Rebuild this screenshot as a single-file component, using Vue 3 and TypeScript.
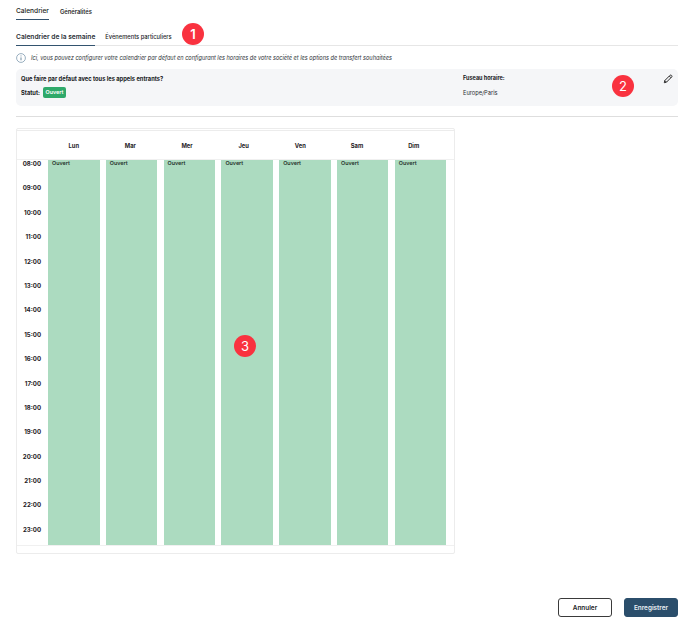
<script setup lang="ts">
const days: string[] = ['Lun', 'Mar', 'Mer', 'Jeu', 'Ven', 'Sam', 'Dim']
const hours: string[] = Array.from({ length: 16 }, (_, i) => `${String(i + 8).padStart(2, '0')}:00`)
</script>

<template>
  <div class="page">
    <nav class="tabs-main">
      <span class="main-tab active">Calendrier</span>
      <span class="main-tab">Généralités</span>
    </nav>

    <nav class="tabs-sub">
      <span class="sub-tab active">Calendrier de la semaine</span>
      <span class="sub-tab">Évènements particuliers</span>
      <span class="marker marker-1">1</span>
    </nav>

    <p class="info">
      <svg class="info-icon" width="10" height="10" viewBox="0 0 10 10" fill="none">
        <circle cx="5" cy="5" r="4.4" stroke="#7f9ab0" stroke-width="0.8" />
        <path d="M5 4.4V7.3" stroke="#5f7d95" stroke-width="0.9" />
        <path d="M5 2.5V3.4" stroke="#5f7d95" stroke-width="0.9" />
      </svg>
      <em>Ici, vous pouvez configurer votre calendrier par défaut en configurant les horaires de votre société et les options de transfert souhaitées</em>
    </p>

    <section class="summary">
      <div class="summary-left">
        <strong>Que faire par défaut avec tous les appels entrants?</strong>
        <div class="status"><strong>Statut:</strong><span class="pill">Ouvert</span></div>
      </div>
      <div class="summary-right">
        <strong>Fuseau horaire:</strong>
        <span>Europe/Paris</span>
      </div>
      <svg class="pencil" width="10" height="10" viewBox="0 0 11 11" fill="none" stroke="#2a2a2a" stroke-width="1.1" stroke-linejoin="round">
        <path d="M1.4 9.6 L2 7.2 L7.8 1.4 C8.2 1 8.8 1 9.2 1.4 L9.6 1.8 C10 2.2 10 2.8 9.6 3.2 L3.8 9 Z" />
        <path d="M6.9 2.3 L8.7 4.1" />
        <path d="M2 7.2 L3.8 9" />
      </svg>
      <span class="marker marker-2">2</span>
    </section>

    <hr class="divider" />

    <section class="calendar">
      <header class="cal-head">
        <span v-for="d in days" :key="d" class="day">{{ d }}</span>
      </header>
      <div class="cal-body">
        <div class="times">
          <span v-for="h in hours" :key="h" class="time">{{ h }}</span>
        </div>
        <div class="columns">
          <div v-for="d in days" :key="d" class="col">Ouvert</div>
        </div>
        <span class="marker marker-3">3</span>
      </div>
    </section>

    <footer class="actions">
      <button class="btn btn-ghost" type="button">Annuler</button>
      <button class="btn btn-primary" type="button">Enregistrer</button>
    </footer>
  </div>
</template>

<style>
html, body { margin: 0; background: #fff; }
</style>

<style scoped>
.page {
  box-sizing: border-box;
  width: 688px;
  height: 626px;
  padding: 0 10px 0 16px;
  display: flex;
  flex-direction: column;
  font-family: Inter, "Liberation Sans", sans-serif;
  font-size: 5.8px;
  color: #1f2328;
  background: #fff;
}
.tabs-main {
  display: flex;
  gap: 11px;
  height: 20px;
  align-items: flex-end;
}
.main-tab {
  height: 15px;
  line-height: 13px;
  font-size: 5.8px;
  font-weight: 600;
  color: #2a2a2a;
  box-sizing: border-box;
}
.main-tab.active {
  font-size: 6.6px;
  font-weight: 500;
  color: #1b1e22;
  border-bottom: 1px solid #33536f;
}
.tabs-sub {
  position: relative;
  display: flex;
  gap: 10px;
  height: 25px;
  align-items: flex-end;
  border-bottom: 1px solid #e6e6e6;
}
.sub-tab {
  height: 15px;
  line-height: 13px;
  font-size: 5.75px;
  font-weight: 500;
  box-sizing: border-box;
  color: #24272b;
}
.sub-tab.active {
  font-size: 6.65px;
  font-weight: 600;
  height: 16px;
  margin-bottom: -1px;
  line-height: 15px;
  border-bottom: 1.5px solid #33536f;
  color: #2a2f35;
}
.marker {
  position: absolute;
  width: 22px;
  height: 22px;
  border-radius: 50%;
  background: #f9323f;
  color: #fff;
  font-size: 13px;
  line-height: 22px;
  text-align: center;
  font-weight: 400;
}
.marker-1 { left: 166px; top: 3px; font-weight: 600; }
.marker-2 { left: 596px; top: 6px; }
.marker-3 { left: 217px; top: 175px; }
.info {
  display: flex;
  align-items: center;
  gap: 5px;
  margin: 6px 0 0;
  height: 12px;
  font-size: 5.6px;
  color: #2e3237;
}
.info-icon { flex: none; }
.summary {
  position: relative;
  box-sizing: border-box;
  height: 37px;
  margin-top: 5px;
  padding: 6px 0 0 5px;
  display: flex;
  background: #f5f6f8;
  border-radius: 5px;
}
.summary strong { font-weight: 700; color: #17191c; font-size: 5.75px; }
.summary-left {
  width: 442px;
  display: flex;
  flex-direction: column;
  gap: 5px;
}
.status {
  display: flex;
  align-items: center;
  gap: 3px;
}
.pill {
  box-sizing: border-box;
  width: 23px;
  text-align: center;
  background: #2fa96a;
  color: #fff;
  border-radius: 2px;
  height: 11px;
  line-height: 11px;
  font-weight: 600;
  font-size: 5.4px;
}
.summary-right {
  display: flex;
  flex-direction: column;
  gap: 8px;
  color: #2a2d31;
}
.summary-right strong { font-size: 5.5px; }
.summary-right span { font-size: 5.7px; }
.pencil { position: absolute; right: 5px; top: 5px; }
.divider {
  border: 0;
  border-top: 1px solid #dedede;
  margin: 10px 0 0;
}
.calendar {
  box-sizing: border-box;
  width: 439px;
  height: 426px;
  margin-top: 11px;
  border: 1px solid #ececec;
  border-radius: 2px;
}
.cal-head {
  box-sizing: border-box;
  height: 30px;
  margin-top: 1px;
  padding: 0 8px 0 31px;
  display: flex;
  gap: 5.17px;
  align-items: center;
  border-top: 1px solid #ececec;
  border-bottom: 1px solid #f0f0f0;
}
.day {
  width: 51.5px;
  text-align: center;
  font-weight: 700;
  font-size: 5.8px;
  color: #1f2226;
}
.cal-body {
  position: relative;
  display: flex;
  height: 385px;
  border-bottom: 1px solid #f0f0f0;
}
.times {
  width: 31px;
  flex: none;
  display: flex;
  flex-direction: column;
  align-items: flex-end;
  padding-right: 7px;
  box-sizing: border-box;
}
.time {
  flex: none;
  height: 24.4px;
  line-height: 8px;
  font-size: 6.1px;
  font-weight: 700;
  color: #1f2226;
}
.columns {
  display: flex;
  gap: 6.3px;
}
.col {
  width: 51.5px;
  background: #acdbc0;
  font-size: 5.4px;
  line-height: 7.5px;
  padding-left: 4px;
  box-sizing: border-box;
  font-weight: 600;
  color: #26332c;
}
.actions {
  display: flex;
  justify-content: flex-end;
  gap: 12px;
  margin-top: 44px;
}
.btn {
  box-sizing: border-box;
  width: 54px;
  height: 19px;
  padding: 0;
  border-radius: 3px;
  font-family: inherit;
  font-size: 6.4px;
  font-weight: 600;
}
.btn-ghost {
  background: #fff;
  border: 1px solid #3a3a3a;
  color: #222;
}
.btn-primary {
  background: #2b4e6b;
  border: 1px solid #2b4e6b;
  color: #e8eef3;
}
</style>
